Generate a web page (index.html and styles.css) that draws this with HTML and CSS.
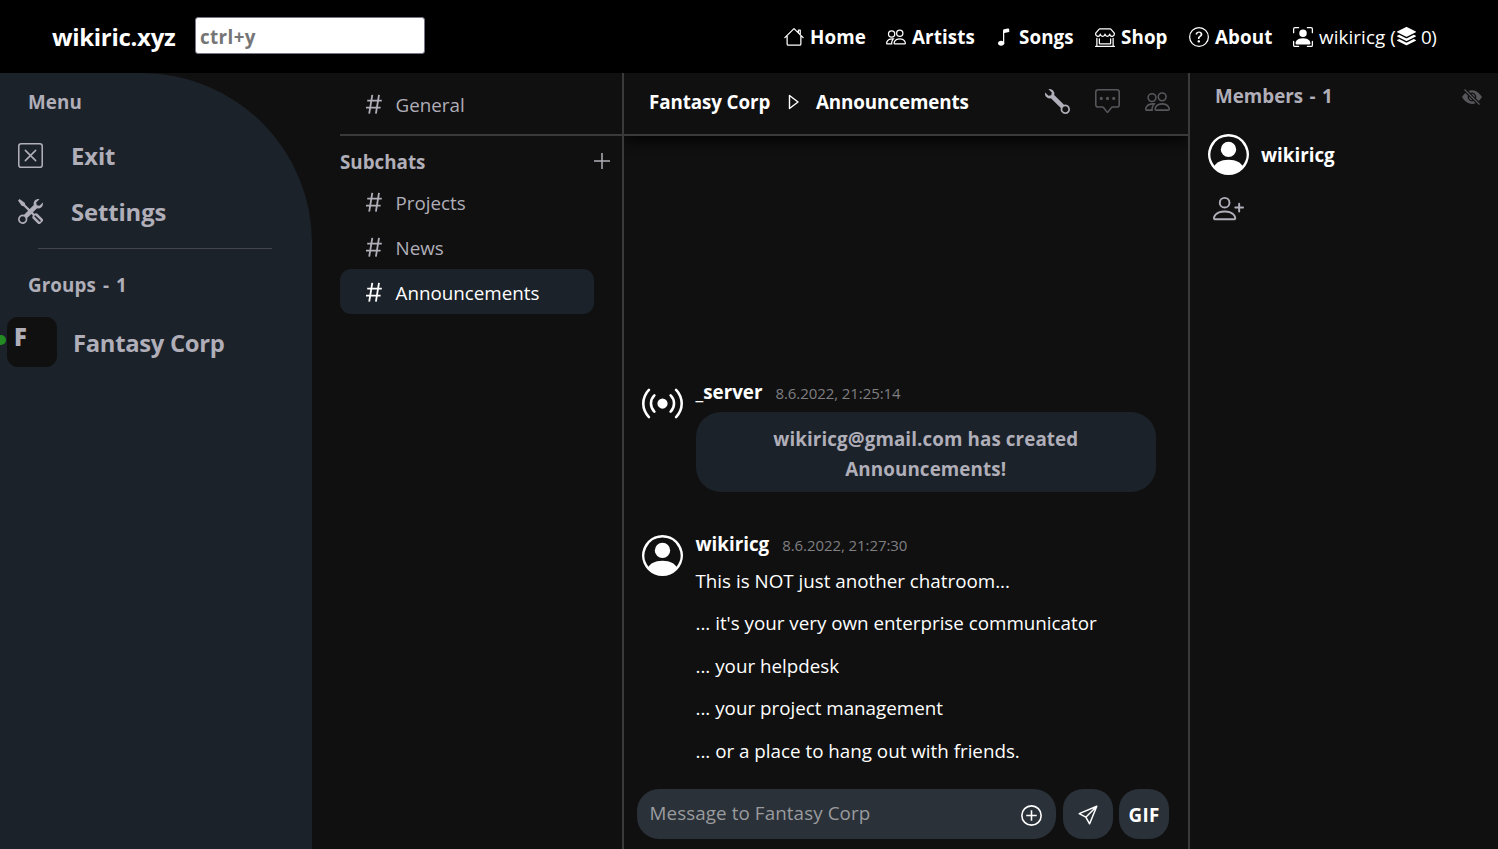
FILE: index.html
```html
<!DOCTYPE html>
<html lang="en">
<head>
<meta charset="utf-8">
<title>wikiric.xyz</title>
<link rel="stylesheet" href="styles.css">
</head>
<body>
<svg class="defs" aria-hidden="true">
  <symbol id="people" viewBox="0 0 16 16"><path d="M15 14s1 0 1-1-1-4-5-4-5 3-5 4 1 1 1 1h8Zm-7.978-1A.261.261 0 0 1 7 12.996c.001-.264.167-1.03.76-1.72C8.312 10.629 9.282 10 11 10c1.717 0 2.687.63 3.24 1.276.593.69.758 1.457.76 1.72l-.008.002a.274.274 0 0 1-.014.002H7.022ZM11 7a2 2 0 1 0 0-4 2 2 0 0 0 0 4Zm3-2a3 3 0 1 1-6 0 3 3 0 0 1 6 0ZM6.936 9.28a5.88 5.88 0 0 0-1.23-.247A7.35 7.35 0 0 0 5 9c-4 0-5 3-5 4 0 .667.333 1 1 1h4.216A2.238 2.238 0 0 1 5 13c0-1.01.377-2.042 1.09-2.904.243-.294.526-.569.846-.816ZM4.92 10A5.493 5.493 0 0 0 4 13H1c0-.26.164-1.03.76-1.724.545-.636 1.492-1.256 3.16-1.275ZM1.5 5.5a3 3 0 1 1 6 0 3 3 0 0 1-6 0Zm3-2a2 2 0 1 0 0 4 2 2 0 0 0 0-4Z"/></symbol>
  <symbol id="hash" viewBox="0 0 18 22"><path d="M7.3 1.8 4.2 20.7M14 1.8l-3.1 18.9M2.2 7.7h14.6M1 14.7h14.6" fill="none" stroke="currentColor" stroke-width="1.8"/></symbol>
  <symbol id="user" viewBox="0 0 16 16"><path d="M11 6a3 3 0 1 1-6 0 3 3 0 0 1 6 0z"/><path d="M0 8a8 8 0 1 1 16 0A8 8 0 0 1 0 8zm8-7a7 7 0 0 0-5.468 11.37C3.242 11.226 4.805 10 8 10s4.757 1.225 5.468 2.37A7 7 0 0 0 8 1z"/></symbol>
</svg>

<header class="topbar">
  <a class="brand">wikiric.xyz</a>
  <input class="search" placeholder="ctrl+y">
  <nav class="nav">
    <a class="nav-home"><svg class="i20" viewBox="0 0 16 16"><path d="M.7 8.5 8 1.3l7.3 7.2M2.5 7.2v6.3a1 1 0 0 0 1 1h9a1 1 0 0 0 1-1V7.2M11.5 4.8V2.5h1.5v3.8" fill="none" stroke="currentColor" stroke-linecap="round" stroke-linejoin="round"/></svg><span>Home</span></a>
    <a class="nav-artists"><svg class="i20"><use href="#people"/></svg><span>Artists</span></a>
    <a class="nav-songs"><svg class="i20" viewBox="0 0 16 16"><path d="M9 13c0 1.105-1.12 2-2.5 2S4 14.105 4 13s1.12-2 2.5-2 2.5.895 2.5 2z"/><path d="M9 3v10H8V3h1z"/><path d="M8 2.82a1 1 0 0 1 .804-.98l3-.6A1 1 0 0 1 13 2.22V4L8 5V2.82z"/></svg><span>Songs</span></a>
    <a class="nav-shop"><svg class="i20" viewBox="0 0 16 16"><path d="M2.97 1.35A1 1 0 0 1 3.73 1h8.54a1 1 0 0 1 .76.35l2.609 3.044A1.5 1.5 0 0 1 16 5.37v.255a2.375 2.375 0 0 1-4.25 1.458A2.371 2.371 0 0 1 9.875 8 2.37 2.37 0 0 1 8 7.083 2.37 2.37 0 0 1 6.125 8a2.37 2.37 0 0 1-1.875-.917A2.375 2.375 0 0 1 0 5.625V5.37a1.5 1.5 0 0 1 .361-.976l2.61-3.045zm1.78 4.275a1.375 1.375 0 0 0 2.75 0 .5.5 0 0 1 1 0 1.375 1.375 0 0 0 2.75 0 .5.5 0 0 1 1 0 1.375 1.375 0 1 0 2.75 0V5.37a.5.5 0 0 0-.12-.325L12.27 2H3.73L1.12 5.045A.5.5 0 0 0 1 5.37v.255a1.375 1.375 0 0 0 2.75 0 .5.5 0 0 1 1 0zM1.5 8.5A.5.5 0 0 1 2 9v6h12V9a.5.5 0 0 1 1 0v6h.5a.5.5 0 0 1 0 1H.5a.5.5 0 0 1 0-1H1V9a.5.5 0 0 1 .5-.5zm2 .5a.5.5 0 0 1 .5.5V13h8V9.5a.5.5 0 0 1 1 0V13a1 1 0 0 1-1 1H4a1 1 0 0 1-1-1V9.5a.5.5 0 0 1 .5-.5z"/></svg><span>Shop</span></a>
    <a class="nav-about"><svg class="i20" viewBox="0 0 16 16"><circle cx="8" cy="8" r="7.5" fill="none" stroke="currentColor"/><path d="M5.255 5.786a.237.237 0 0 0 .241.247h.825c.138 0 .248-.113.266-.25.09-.656.54-1.134 1.342-1.134.686 0 1.314.343 1.314 1.168 0 .635-.374.927-.965 1.371-.673.489-1.206 1.06-1.168 1.987l.003.217a.25.25 0 0 0 .25.246h.811a.25.25 0 0 0 .25-.25v-.105c0-.718.273-.927 1.01-1.486.609-.463 1.244-.977 1.244-2.056 0-1.511-1.276-2.241-2.673-2.241-1.267 0-2.655.59-2.75 2.286zm1.557 5.763c0 .533.425.927 1.01.927.609 0 1.028-.394 1.028-.927 0-.552-.42-.94-1.029-.94-.584 0-1.009.388-1.009.94z"/></svg><span>About</span></a>
    <a class="nav-user"><svg class="i20" viewBox="0 0 16 16"><path d="M1.5 1a.5.5 0 0 0-.5.5v3a.5.5 0 0 1-1 0v-3A1.5 1.5 0 0 1 1.5 0h3a.5.5 0 0 1 0 1h-3zM11 .5a.5.5 0 0 1 .5-.5h3A1.5 1.5 0 0 1 16 1.5v3a.5.5 0 0 1-1 0v-3a.5.5 0 0 0-.5-.5h-3a.5.5 0 0 1-.5-.5zM.5 11a.5.5 0 0 1 .5.5v3a.5.5 0 0 0 .5.5h3a.5.5 0 0 1 0 1h-3A1.5 1.5 0 0 1 0 14.5v-3a.5.5 0 0 1 .5-.5zm15 0a.5.5 0 0 1 .5.5v3a1.5 1.5 0 0 1-1.5 1.5h-3a.5.5 0 0 1 0-1h3a.5.5 0 0 0 .5-.5v-3a.5.5 0 0 1 .5-.5z"/><path d="M3 14s-1 0-1-1 1-4 6-4 6 3 6 4-1 1-1 1H3zm8-9a3 3 0 1 1-6 0 3 3 0 0 1 6 0z"/></svg><span class="uname">wikiricg (</span><svg class="stack" viewBox="0 0 16 16"><path d="m14.12 10.163 1.715.858c.22.11.22.424 0 .534L8.267 15.34a.598.598 0 0 1-.534 0L.165 11.555a.299.299 0 0 1 0-.534l1.716-.858 5.317 2.659c.505.252 1.1.252 1.604 0l5.317-2.66zM7.733.063a.598.598 0 0 1 .534 0l7.568 3.784a.3.3 0 0 1 0 .535L8.267 8.165a.598.598 0 0 1-.534 0L.165 4.382a.299.299 0 0 1 0-.535L7.733.063z"/><path d="m14.12 6.576 1.715.858c.22.11.22.424 0 .534l-7.568 3.784a.598.598 0 0 1-.534 0L.165 7.968a.299.299 0 0 1 0-.534l1.716-.858 5.317 2.659c.505.252 1.1.252 1.604 0l5.317-2.659z"/></svg><span class="count">0)</span></a>
  </nav>
</header>

<div class="app">
  <aside class="sidebar">
    <h2 class="side-title">Menu</h2>
    <a class="side-link"><svg class="i26" viewBox="0 0 16 16"><rect x=".5" y=".5" width="15" height="15" rx="1.5" fill="none" stroke="currentColor"/><path d="m4.7 4.7 6.6 6.6m0-6.6-6.6 6.6" stroke="currentColor" stroke-linecap="round"/></svg><span>Exit</span></a>
    <a class="side-link"><svg class="i26" viewBox="0 0 16 16"><path d="M1 0 0 1l2.2 3.081a1 1 0 0 0 .815.419h.07a1 1 0 0 1 .708.293l2.675 2.675-2.617 2.654A3.003 3.003 0 0 0 0 13a3 3 0 1 0 5.878-.851l2.654-2.617.968.968-.305.914a1 1 0 0 0 .242 1.023l3.356 3.356a1 1 0 0 0 1.414 0l1.586-1.586a1 1 0 0 0 0-1.414l-3.356-3.356a1 1 0 0 0-1.023-.242L10.5 9.5l-.96-.96 2.68-2.643A3.005 3.005 0 0 0 16 3c0-.269-.035-.53-.102-.777l-2.14 2.141L12 4l-.364-1.757L13.777.102a3 3 0 0 0-3.675 3.68L7.462 6.46 4.793 3.793a1 1 0 0 1-.293-.707v-.071a1 1 0 0 0-.419-.814L1 0zm9.646 10.646a.5.5 0 0 1 .708 0l3 3a.5.5 0 0 1-.708.708l-3-3a.5.5 0 0 1 0-.708zM3 11l.471.242.529.026.287.445.445.287.026.529L5 13l-.242.471-.026.529-.445.287-.287.445-.529.026L3 15l-.471-.242L2 14.732l-.287-.445L1.268 14l-.026-.529L1 13l.242-.471.026-.529.445-.287.287-.445.529-.026L3 11z"/></svg><span class="t-settings">Settings</span></a>
    <hr class="side-rule">
    <h2 class="side-title groups">Groups - 1</h2>
    <a class="group"><i class="dot"></i><b class="tile">F</b><span>Fantasy Corp</span></a>
  </aside>

  <section class="channels">
    <a class="channel general"><svg class="hash"><use href="#hash"/></svg><span>General</span></a>
    <div class="sub-head"><span>Subchats</span><svg class="plus" viewBox="0 0 16 16"><path d="M8 0v16M0 8h16" stroke="currentColor" stroke-width="1.5"/></svg></div>
    <a class="channel"><svg class="hash"><use href="#hash"/></svg><span>Projects</span></a>
    <a class="channel"><svg class="hash"><use href="#hash"/></svg><span>News</span></a>
    <a class="channel active"><svg class="hash"><use href="#hash"/></svg><span>Announcements</span></a>
  </section>

  <main class="chat">
    <div class="chat-head">
      <span class="crumb-a">Fantasy Corp</span>
      <svg class="caret" viewBox="0 0 12 16"><path d="M1.5 1.5v13L10 8z" fill="none" stroke="currentColor" stroke-width="1.4" stroke-linejoin="round"/></svg>
      <span class="crumb-b">Announcements</span>
      <div class="tools">
        <svg class="i26 lit" viewBox="0 0 16 16"><path d="M.102 2.223A3.004 3.004 0 0 0 3.78 5.897l6.341 6.252A3.003 3.003 0 0 0 13 16a3 3 0 1 0-.851-5.878L5.897 3.781A3.004 3.004 0 0 0 2.223.1l2.141 2.142L4 4l-1.757.364L.102 2.223zm13.37 9.019.528.026.287.445.445.287.026.529L15 13l-.242.471-.026.529-.445.287-.287.445-.529.026L13 15l-.471-.242-.529-.026-.287-.445-.445-.287-.026-.529L11 13l.242-.471.026-.529.445-.287.287-.445.529-.026L13 11l.471.242z"/></svg>
        <svg class="i26" viewBox="0 0 16 16"><path d="M14 1a1 1 0 0 1 1 1v8a1 1 0 0 1-1 1h-2.5a2 2 0 0 0-1.6.8L8 14.333 6.1 11.8a2 2 0 0 0-1.6-.8H2a1 1 0 0 1-1-1V2a1 1 0 0 1 1-1h12zM2 0a2 2 0 0 0-2 2v8a2 2 0 0 0 2 2h2.5a1 1 0 0 1 .8.4l1.9 2.533a1 1 0 0 0 1.6 0l1.9-2.533a1 1 0 0 1 .8-.4H14a2 2 0 0 0 2-2V2a2 2 0 0 0-2-2H2z"/><circle cx="4" cy="6" r="1"/><circle cx="8" cy="6" r="1"/><circle cx="12" cy="6" r="1"/></svg>
        <svg class="i26"><use href="#people"/></svg>
      </div>
    </div>
    <div class="messages">
      <article class="msg server">
        <svg class="avatar cast" viewBox="0 0 16 16"><path d="M3.05 3.05a7 7 0 0 0 0 9.9.5.5 0 0 1-.707.707 8 8 0 0 1 0-11.314.5.5 0 0 1 .707.707zm2.122 2.122a4 4 0 0 0 0 5.656.5.5 0 1 1-.708.708 5 5 0 0 1 0-7.072.5.5 0 0 1 .708.708zm5.656-.708a.5.5 0 0 1 .708 0 5 5 0 0 1 0 7.072.5.5 0 1 1-.708-.708 4 4 0 0 0 0-5.656.5.5 0 0 1 0-.708zm2.122-2.12a.5.5 0 0 1 .707 0 8 8 0 0 1 0 11.313.5.5 0 0 1-.707-.707 7 7 0 0 0 0-9.9.5.5 0 0 1 0-.707zM10 8a2 2 0 1 1-4 0 2 2 0 0 1 4 0z"/></svg>
        <div class="body">
          <div class="meta"><b>_server</b><time>8.6.2022, 21:25:14</time></div>
          <div class="notice">wikiricg@gmail.com has created<br>Announcements!</div>
        </div>
      </article>
      <article class="msg">
        <svg class="avatar"><use href="#user"/></svg>
        <div class="body">
          <div class="meta later"><b>wikiricg</b><time>8.6.2022, 21:27:30</time></div>
          <p>This is NOT just another chatroom...</p>
          <p>... it's your very own enterprise communicator</p>
          <p>... your helpdesk</p>
          <p>... your project management</p>
          <p>... or a place to hang out with friends.</p>
        </div>
      </article>
    </div>
    <div class="composer">
      <div class="field"><span>Message to Fantasy Corp</span><svg class="add" viewBox="0 0 20 20"><circle cx="10" cy="10" r="9.2"/><path d="M10 5v10M5 10h10"/></svg></div>
      <button class="btn"><svg class="send" viewBox="0 0 20 20"><path d="M18.8 1.2 1.2 8.6l6.6 3.6 3.8 6.6zM18.8 1.2l-11 11"/></svg></button>
      <button class="btn">GIF</button>
    </div>
  </main>

  <aside class="members">
    <div class="mem-head"><span>Members - 1</span><svg class="i20 eye" viewBox="0 0 16 16"><path d="m10.79 12.912-1.614-1.615a3.5 3.5 0 0 1-4.474-4.474l-2.06-2.06C.938 6.278 0 8 0 8s3 5.5 8 5.5a7.029 7.029 0 0 0 2.79-.588zM5.21 3.088A7.028 7.028 0 0 1 8 2.5c5 0 8 5.5 8 5.5s-.939 1.721-2.641 3.238l-2.062-2.062a3.5 3.5 0 0 0-4.474-4.474L5.21 3.089z"/><path d="M5.525 7.646a2.5 2.5 0 0 0 2.829 2.829l-2.83-2.829zm4.95.708-2.829-2.83a2.5 2.5 0 0 1 2.829 2.829zm3.171 6-12-12 .708-.708 12 12-.708.708z"/></svg></div>
    <div class="member"><svg class="avatar"><use href="#user"/></svg><b>wikiricg</b></div>
    <svg class="invite" viewBox="0 0 16 16"><path d="M6 8a3 3 0 1 0 0-6 3 3 0 0 0 0 6zm2-3a2 2 0 1 1-4 0 2 2 0 0 1 4 0zm4 8c0 1-1 1-1 1H1s-1 0-1-1 1-4 6-4 6 3 6 4zm-1-.004c-.001-.246-.154-.986-.832-1.664C9.516 10.68 8.289 10 6 10c-2.29 0-3.516.68-4.168 1.332-.678.678-.83 1.418-.832 1.664h10z"/><path d="M13.5 5a.5.5 0 0 1 .5.5V7h1.5a.5.5 0 0 1 0 1H14v1.5a.5.5 0 0 1-1 0V8h-1.5a.5.5 0 0 1 0-1H13V5.5a.5.5 0 0 1 .5-.5z"/></svg>
  </aside>
</div>
</body>
</html>
```
FILE: styles.css
```css
* { box-sizing: border-box; }
body {
  margin: 0;
  height: 849px;
  display: flex;
  flex-direction: column;
  overflow: hidden;
  background: #101010;
  color: #fff;
  font: 18.8px/30px "Open Sans", "Noto Sans", sans-serif;
  letter-spacing: 0;
  white-space: nowrap;
}
svg { fill: currentColor; flex: none; display: block; }
.defs { position: absolute; width: 0; height: 0; }
.i20 { width: 20px; height: 20px; }
.i26 { width: 25px; height: 25px; }

.topbar { height: 73px; flex: none; background: #000; display: flex; align-items: center; padding: 0 0 2px 52px; }
.brand { width: 143px; padding-top: 2px; font-size: 24px; font-weight: 700; letter-spacing: -0.3px; }
.search {
  width: 230px; height: 37px; padding: 3px 4px 1px; border: 1px solid #767687; border-radius: 3px;
  background: #fff; font: 700 18.8px "Open Sans", sans-serif; letter-spacing: 0.4px;
}
.search::placeholder { color: #757575; opacity: 1; }
.nav { display: flex; margin: 2px 0 0 359px; font-weight: 700; letter-spacing: 0.1px; }
.nav a { display: flex; align-items: center; gap: 6px; }
.nav-home { width: 102px; }
.nav-artists { width: 107px; }
.nav-songs { width: 102px; }
.nav-shop { width: 94px; }
.nav-about { width: 104px; }
.nav .nav-user { gap: 0; font-weight: 400; letter-spacing: 0; }
.uname { width: 78px; margin-left: 6px; letter-spacing: 0.1px; }
.stack { width: 19px; height: 19px; }
.count { margin-left: 5px; letter-spacing: -0.4px; }

.app { flex: 1; min-height: 0; display: flex; }
.sidebar { width: 312px; flex: none; background: #1b2229; border-top-right-radius: 170px; color: #b0aeb8; }
.side-title { margin: 14px 0 10px 28px; font-size: 18.8px; line-height: 30px; font-weight: 700; letter-spacing: 0.1px; }
.side-link { height: 56px; padding-left: 18px; display: flex; align-items: center; gap: 28px; font-size: 23.8px; font-weight: 700; letter-spacing: -0.1px; }
.side-link span { padding-top: 2px; }
.side-rule { width: 234px; height: 1px; margin: 9px 0 0 38px; border: 0; background: #43474d; }
.groups { margin: 21px 0 16px 28px; word-spacing: 2px; }
.group { height: 52px; display: flex; align-items: center; font-size: 23.8px; font-weight: 700; letter-spacing: -0.3px; }
.group span { padding-top: 2px; }
.dot { width: 10px; height: 10px; margin: -5px 1px 0 -4px; border-radius: 50%; background: #228b22; }
.tile { width: 50px; height: 50px; margin: 0 16px 0 0; padding: 5px 7px; border-radius: 11px; background: #101010; }

.channels { width: 312px; flex: none; padding-left: 28px; border-right: 2px solid #3a3a3b; color: #b0aeb8; }
.channel { display: flex; align-items: center; width: 254px; height: 45px; padding-left: 25px; border-radius: 11px; gap: 12px; }
.hash { width: 18px; height: 22px; margin-top: 1px; }
.channel span { padding: 2px 0 0 0.5px; }
.general { width: 282px; height: 63px; border-bottom: 2px solid #3a3a3b; border-radius: 0; }
.sub-head { height: 43px; padding: 8px 12px 0 0; display: flex; align-items: center; justify-content: space-between; font-weight: 700; }
.plus { width: 16px; height: 16px; margin-top: -2px; }
.active { background: #1b2229; color: #fff; }

.chat { width: 564px; flex: none; display: flex; flex-direction: column; }
.chat-head { height: 63px; flex: none; padding: 0 18px 5px 25px; display: flex; align-items: center; border-bottom: 2px solid #3a3a3b; box-shadow: 0 3px 15px #000; clip-path: inset(0 0 -20px 0); font-weight: 700; letter-spacing: -0.1px; }
.chat-head span { padding-top: 2px; }
.crumb-a { width: 139px; }
.caret { width: 12px; height: 16px; margin: 2px 16px 0 0; }
.tools { margin-left: auto; display: flex; gap: 25px; color: #57565b; }
.lit { color: #b0aeb8; }
.messages { flex: 1; display: flex; flex-direction: column; justify-content: flex-end; padding: 0 32px 13px 18px; }
.msg { display: flex; gap: 12.5px; }
.server { margin-bottom: 37px; }
.avatar { width: 41px; height: 41px; margin-top: 6px; }
.cast { margin-top: 5px; }
.body { flex: 1; }
.meta { height: 34px; display: flex; align-items: center; gap: 13px; padding-bottom: 5px; }
.later { height: 37px; padding-bottom: 7px; }
.meta time { font-size: 15px; color: #7f7f82; letter-spacing: -0.08px; padding-top: 2px; }
.notice { height: 80px; padding: 12px 0; border-radius: 25px; background: #1b2229; color: #b0aeb8; text-align: center; line-height: 30px; font-weight: 700; letter-spacing: 0.1px; }
.msg p { margin: 0 0 12.6px; line-height: 30px; }
.msg p:last-child { margin-bottom: 0; }
.composer { height: 70px; flex: none; padding: 10px 0 0 13px; display: flex; }
.field { width: 419px; height: 50px; border-radius: 22px; background: #2a3138; color: #9a9b9e; display: flex; align-items: center; justify-content: space-between; padding: 0 14px 2px 12.5px; letter-spacing: 0.1px; }
.add { width: 21px; height: 21px; margin-top: 4px; color: #fff; fill: none; stroke: currentColor; stroke-width: 1.5; }
.btn { width: 50px; height: 50px; margin-left: 6.5px; padding: 2px 0 0; border: 0; border-radius: 20px; background: #2a3138; color: #fff; font: 700 18.8px "Open Sans", sans-serif; letter-spacing: 0.3px; }
.send { width: 20px; height: 20px; margin: auto; fill: none; stroke: currentColor; stroke-width: 1.5; stroke-linejoin: round; }

.members { flex: 1; border-left: 2px solid #3a3a3b; padding: 8px 16px 0 18px; }
.mem-head { height: 30px; padding-left: 7px; display: flex; align-items: center; justify-content: space-between; color: #b0aeb8; font-weight: 700; word-spacing: 1.5px; }
.eye { color: #57565b; margin-top: 2px; }
.member { margin-top: 23px; height: 41px; display: flex; align-items: center; gap: 12px; }
.member .avatar { margin: 0; }
.invite { width: 31px; height: 31px; margin: 18px 0 0 5px; color: #b0aeb8; }
```
